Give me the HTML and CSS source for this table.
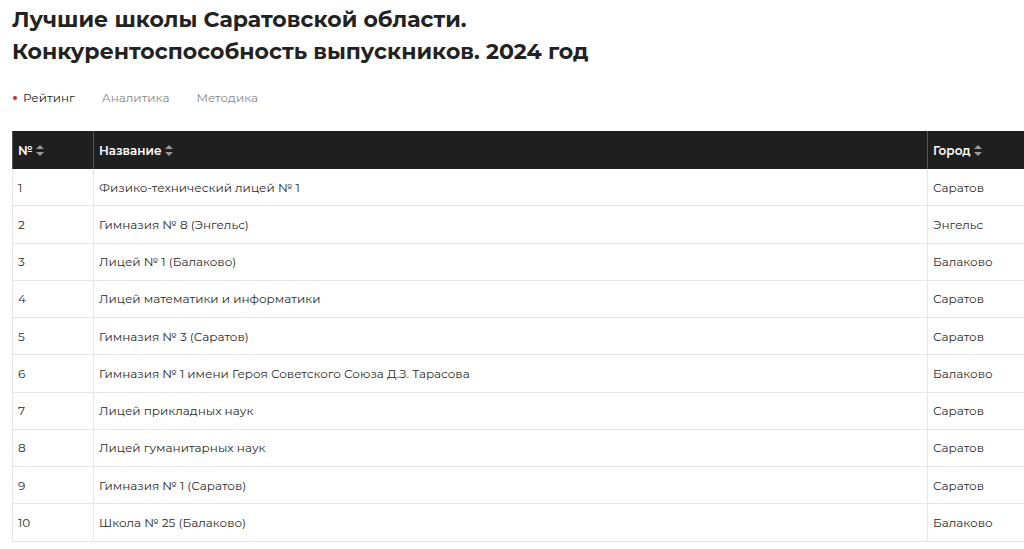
FILE: index.html
```html
<!DOCTYPE html>
<html lang="ru">
<head>
<meta charset="utf-8">
<title>Лучшие школы Саратовской области</title>
<link rel="stylesheet" href="styles.css">
</head>
<body>
<div class="page">
  <h1 class="title">Лучшие школы Саратовской области.<br>Конкурентоспособность выпускников. 2024 год</h1>
  <nav class="tabs">
    <span class="tab active">Рейтинг</span>
    <span class="tab">Аналитика</span>
    <span class="tab">Методика</span>
  </nav>
  <table class="rating">
    <colgroup>
      <col class="c-num">
      <col class="c-name">
      <col class="c-city">
    </colgroup>
    <thead>
      <tr>
        <th>№ <span class="sort"></span></th>
        <th>Название <span class="sort"></span></th>
        <th>Город <span class="sort"></span></th>
      </tr>
    </thead>
    <tbody>
      <tr><td>1</td><td>Физико-технический лицей № 1</td><td>Саратов</td></tr>
      <tr><td>2</td><td>Гимназия № 8 (Энгельс)</td><td>Энгельс</td></tr>
      <tr><td>3</td><td>Лицей № 1 (Балаково)</td><td>Балаково</td></tr>
      <tr><td>4</td><td>Лицей математики и информатики</td><td>Саратов</td></tr>
      <tr><td>5</td><td>Гимназия № 3 (Саратов)</td><td>Саратов</td></tr>
      <tr><td>6</td><td>Гимназия № 1 имени Героя Советского Союза Д.З. Тарасова</td><td>Балаково</td></tr>
      <tr><td>7</td><td>Лицей прикладных наук</td><td>Саратов</td></tr>
      <tr><td>8</td><td>Лицей гуманитарных наук</td><td>Саратов</td></tr>
      <tr><td>9</td><td>Гимназия № 1 (Саратов)</td><td>Саратов</td></tr>
      <tr><td>10</td><td>Школа № 25 (Балаково)</td><td>Балаково</td></tr>
    </tbody>
  </table>
</div>
</body>
</html>
```
FILE: styles.css
```css
html, body {
  margin: 0;
  padding: 0;
  background: #fff;
  overflow: hidden;
}
body {
  font-family: "Montserrat", "Inter", "Noto Sans", sans-serif;
  color: #2b2b2b;
}
.page {
  padding: 4px 0 0 12px;
  width: 1140px;
}
.title {
  margin: 0;
  font-size: 22px;
  line-height: 32px;
  font-weight: 700;
  color: #222;
}
.tabs {
  display: flex;
  gap: 27px;
  margin-top: 21px;
  font-size: 12px;
  line-height: 18px;
  color: #888;
}
.tab.active {
  color: #222;
  display: flex;
  align-items: center;
}
.tab.active::before {
  content: "";
  width: 4px;
  height: 4px;
  border-radius: 50%;
  background: #e3202a;
  margin: 0 6px 0 1px;
}
.rating {
  margin-top: 24px;
  border-collapse: collapse;
  width: 1110px;
  table-layout: fixed;
  font-size: 12px;
}
.c-num { width: 81px; }
.c-name { width: 834px; }
.c-city { width: 195px; }
.rating th {
  background: #1f1f1f;
  color: #fff;
  font-weight: 600;
  text-align: left;
  height: 38px;
  padding: 0 5px;
  border-left: 1px solid #555;
}
.rating td {
  height: 36.25px;
  padding: 0 5px;
  border-left: 1px solid #e6e6e6;
  border-bottom: 1px solid #e6e6e6;
  color: #2b2b2b;
}
.sort {
  display: inline-block;
  width: 8px;
  height: 11px;
  vertical-align: -1px;
  margin-left: 0;
  position: relative;
}
.sort::before, .sort::after {
  content: "";
  position: absolute;
  left: 0;
  border-left: 4px solid transparent;
  border-right: 4px solid transparent;
}
.sort::before { top: 0; border-bottom: 4px solid #999; }
.sort::after { bottom: 0; border-top: 4px solid #999; }
```
